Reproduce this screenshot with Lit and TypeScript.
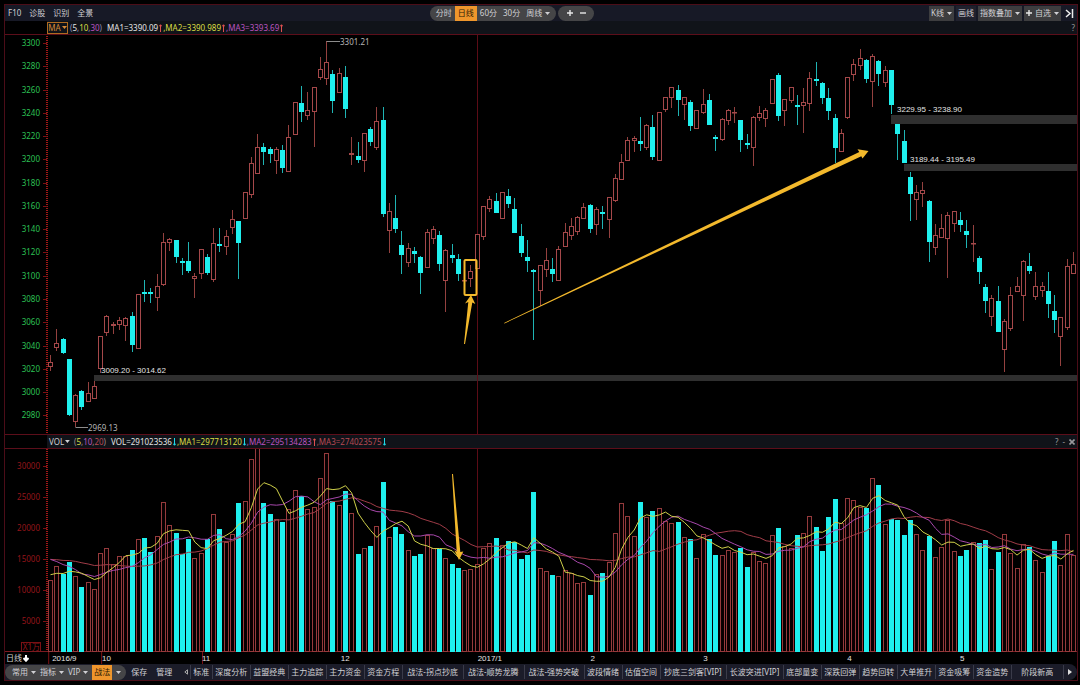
import { LitElement, html, svg, css } from "lit";
import { customElement } from "lit/decorators.js";

/* One row per trading day: high, body top, body bottom, low, f = falling / r = rising. */
const CANDLES = `355,362,367,371,r 329,343,348,351,r 338,339,353,354,f 359,359,415,416,f 394,395,422,427,r
390,391,407,410,f 382,393,402,402,r 381,386,399,399,r 336,336,369,373,r 315,316,333,336,r
322,324,326,334,r 317,320,325,330,r 317,318,326,341,r 312,316,345,352,f 294,294,349,349,r
280,292,293,302,f 288,292,294,303,f 274,286,298,311,r 233,242,285,286,r 238,239,243,251,r
240,240,257,263,f 258,261,262,275,f 242,261,271,273,f 273,276,279,298,r 249,249,274,279,r
254,257,273,275,f 228,243,280,282,r 228,244,246,252,f 230,236,247,255,r 210,219,228,234,r
221,221,243,279,f 192,192,219,219,r 157,163,195,198,r 134,147,174,174,r 143,147,152,165,f
147,149,154,163,f 147,149,161,174,r 145,150,168,173,f 125,137,172,172,r 102,102,135,135,r
86,103,112,122,f 92,110,116,120,r 87,87,112,147,r 57,69,78,80,r 41,62,79,85,r
70,74,101,113,f 68,73,93,93,r 66,77,109,118,f 137,153,155,165,r 142,156,160,163,f
133,133,161,172,r 127,129,142,146,f 107,121,148,150,r 107,120,214,217,f 203,211,231,253,r
195,218,229,233,f 231,245,255,274,f 243,248,263,267,r 247,251,254,263,f 256,257,273,294,f
229,232,268,268,r 226,229,239,244,r 231,235,264,271,f 249,250,281,312,r 244,255,258,263,f
254,259,274,281,f 279,280,281,282,r 265,271,279,287,r 234,234,269,269,r 206,206,237,240,r
196,199,209,212,r 193,201,213,213,f 192,192,219,219,r 189,196,204,208,f 198,209,233,233,f
224,236,253,257,f 240,257,261,272,f 269,270,272,340,f 265,265,291,306,r 248,260,270,277,r
258,269,274,282,f 246,249,281,281,r 223,232,247,247,r 218,226,236,240,r 216,217,232,235,r
203,207,219,219,r 204,205,229,233,f 207,209,225,235,r 206,212,214,229,f 197,197,220,238,r
174,178,201,202,r 154,162,180,180,r 137,140,161,161,r 136,138,141,152,r 117,141,144,151,f
124,125,148,150,r 115,127,157,160,f 112,112,161,161,r 97,97,110,112,r 87,87,98,108,r
85,90,100,116,f 97,97,105,120,r 100,102,126,131,f 110,110,129,129,r 89,104,113,114,r
94,100,125,125,f 135,137,138,151,f 118,119,140,141,r 109,110,121,125,r 107,112,113,123,r
120,120,140,152,f 134,143,145,149,f 116,117,148,166,r 106,113,118,121,r 108,110,119,127,r
79,79,104,104,r 73,75,116,121,f 99,99,111,126,r 87,87,101,103,r 95,105,107,125,f
88,102,106,133,r 72,78,104,111,r 62,79,81,86,f 82,83,98,104,f 88,98,111,120,f
114,118,148,163,f 129,133,152,152,r 77,77,118,119,r 59,64,75,81,r 49,58,66,70,r
59,60,79,83,f 54,56,82,107,r 60,61,74,86,f 66,70,83,87,r 70,70,105,114,f
124,124,134,160,f 130,141,163,163,f 172,177,194,221,f 185,192,200,220,r 182,190,194,207,r
200,201,242,262,f 224,235,248,255,r 214,228,238,238,r 212,215,239,278,r 211,211,224,232,r
212,220,225,232,f 220,231,235,248,f 225,243,244,262,r 256,258,272,284,f 284,287,301,313,f
295,298,317,326,r 286,301,332,332,f 319,321,350,372,r 287,295,329,331,r 277,286,292,292,r
260,261,296,321,r 253,266,271,274,f 272,286,297,300,r 282,286,291,297,r 272,291,304,318,f
295,311,320,333,f 317,317,337,366,r 259,266,328,330,r 252,264,274,274,r`
  .split(/\s+/)
  .map((row) => {
    const p = row.split(",");
    return { high: +p[0], top: +p[1], bottom: +p[2], low: +p[3], falling: p[4] === "f" };
  });

/* Volume of each day as a depth below the plot ceiling, three units to a pixel. */
const VOLUMES = [
  451, 408, 433, 397, 439, 472, 457, 478, 370, 355, 403, 379, 379, 361, 328, 325, 366, 319, 217, 286, 309, 373, 327,
  385, 370, 326, 251, 297, 336, 313, 218, 212, 88, 54, 218, 253, 268, 275, 237, 181, 198, 236, 232, 143, 70, 213, 226,
  184, 250, 373, 353, 348, 287, 155, 322, 292, 312, 359, 378, 373, 316, 353, 357, 383, 403, 414, 421, 418, 403, 353,
  340, 324, 346, 332, 335, 388, 376, 185, 413, 422, 436, 439, 421, 430, 458, 455, 494, 432, 428, 396, 310, 220, 257,
  317, 216, 262, 244, 235, 274, 280, 277, 320, 326, 385, 311, 328, 375, 376, 361, 367, 354, 412, 366, 394, 400, 314,
  294, 347, 355, 314, 308, 257, 292, 364, 262, 206, 280, 205, 211, 232, 234, 143, 165, 283, 267, 270, 316, 270, 313,
  361, 319, 382, 350, 269, 364, 379, 361, 335, 339, 330, 416, 367, 311, 370, 413, 343, 352, 391, 427, 379, 334, 406,
  311, 376,
];

/* Days before the first visible one, needed by the moving averages. */
const HISTORY = [...Array(10).fill(388), ...Array(5).fill(342), ...Array(4).fill(430)];

const VOLUME_FLOOR = 652;
const dayX = (i: number) => 50.5 + i * 6.276;
const barLeft = (i: number) => Math.floor(dayX(i)) - 2;
const volumeY = (v: number) => 430 + v / 3;

function averageLine(days: number): string {
  const all = [...HISTORY, ...VOLUMES];
  return VOLUMES.map((_, i) => {
    const end = HISTORY.length + i + 1;
    const part = all.slice(Math.max(0, end - days), end);
    const mean = part.reduce((a, b) => a + b, 0) / part.length;
    return `${dayX(i).toFixed(1)},${volumeY(mean).toFixed(1)}`;
  }).join(" ");
}

const PRICE_TICKS = Array.from({ length: 17 }, (_, i) => ({ label: 3300 - i * 20, y: 43 + i * 23.27 }));
const VOLUME_TICKS = Array.from({ length: 6 }, (_, i) => ({ label: 30000 - i * 5000, y: 466 + i * 31 }));

const GAPS = [
  { x: 891, y: 115, h: 9, label: "3229.95 - 3238.90", tx: 897, ty: 112 },
  { x: 904, y: 164, h: 7, label: "3189.44 - 3195.49", tx: 910, ty: 162 },
  { x: 94, y: 375, h: 6, label: "3009.20 - 3014.62", tx: 101, ty: 373 },
];

const MONTHS: [number, string][] = [
  [51, "2016/9"], [101, "10"], [201, "11"], [340, "12"], [477, "2017/1"],
  [590, "2"], [703, "3"], [847, "4"], [960, "5"],
];

const STRATEGIES = [
  "标准", "深度分析", "益盟经典", "主力追踪", "主力资金", "资金方程", "战法-拐点抄底", "战法-顺势龙腾",
  "战法-强势突破", "波段情绪", "估值空间", "抄底三剑客[VIP]", "长波突进[VIP]", "底部量变", "深跌回弹",
  "趋势回转", "大单推升", "资金吸筹", "资金造势", "阶段新高",
];

const tabClass = (name: string) =>
  name.includes("-") ? "tab series" : name.includes("[") ? "tab vip" : "tab";

const caret = html`<svg class="caret" viewBox="0 0 5 3" aria-hidden="true"><path d="M0 0h5L2.5 3z" /></svg>`;
const rise = html`<svg class="trend up" viewBox="0 0 3 8" role="img" aria-label="上升">
  <path d="M1.5 8V1M0 2.5L1.5 .7L3 2.5" />
</svg>`;
const fall = html`<svg class="trend down" viewBox="0 0 3 8" role="img" aria-label="下降">
  <path d="M1.5 0V7M0 5.5L1.5 7.3L3 5.5" />
</svg>`;

@customElement("app-root")
export class AppRoot extends LitElement {
  static styles = css`
    :host {
      display: block;
      min-height: 100vh;
      box-sizing: border-box;
      padding: 4px 2px 3px 4px;
      background: #000;
      color: #d0d0d4;
      font: 8px/12px "Noto Sans", "Noto Sans CJK SC", sans-serif;
    }
    button {
      font: inherit;
      color: inherit;
      background: none;
      border: 0;
      margin: 0;
      padding: 0;
      white-space: nowrap;
      display: flex;
      align-items: center;
      justify-content: center;
      gap: 3px;
    }
    svg {
      display: block;
    }
    .frame {
      border: 1px solid #4c0d18;
    }
    .caret {
      width: 5px;
      height: 3px;
      fill: currentColor;
    }
    .toolbar {
      display: grid;
      grid-template-columns: 1fr auto 1fr;
      height: 16px;
      background: #171926;
    }
    .group {
      display: flex;
      align-items: center;
      gap: 8px;
      padding-left: 3px;
    }
    .centre {
      display: flex;
      align-items: center;
      gap: 2px;
      padding-right: 58px;
    }
    .pill {
      display: flex;
      align-items: stretch;
      height: 15px;
      border-radius: 8px;
      background: #454547;
    }
    .period {
      padding: 0 3px;
    }
    .periods {
      padding: 0 3px;
    }
    .zoom {
      padding: 0 5px;
    }
    .zoom button {
      width: 13px;
    }
    .glyph {
      width: 6px;
      height: 6px;
      fill: none;
      stroke: #e8e8e8;
      stroke-width: 1.4;
    }
    .active {
      background: #ef962c;
      color: #2b1a06;
    }
    .tools {
      display: flex;
      align-items: center;
      justify-content: flex-end;
      gap: 2px;
      padding-right: 1px;
    }
    .tool {
      height: 15px;
      padding: 0 2px;
      background: #3d3d3f;
    }
    .plain {
      background: #20212d;
    }
    .end {
      width: 13px;
    }
    .end svg {
      width: 9px;
      height: 9px;
      fill: none;
      stroke: #eee;
      stroke-width: 1.5;
    }
    .legend {
      display: flex;
      align-items: center;
      height: 13px;
      margin-left: 42px;
      background: #101319;
      white-space: nowrap;
    }
    .lined {
      border-bottom: 1px solid #5c0e1a;
    }
    .study {
      border-top: 1px solid #5c0e1a;
    }
    .indicator {
      box-sizing: border-box;
      height: 12px;
      width: 21px;
      gap: 1px;
    }
    .boxed {
      border: 1px solid #b06a20;
      color: #d88a38;
    }
    .flat {
      margin-left: 2px;
    }
    .params {
      margin: 0 5px 0 2px;
    }
    .volume-params {
      margin: 0 5px 0 4px;
      color: #a08f8f;
    }
    .trend {
      width: 3px;
      height: 8px;
      margin: 0 1px;
      fill: none;
      stroke: currentColor;
    }
    .lavender {
      color: #9090b8;
    }
    .white {
      color: #e4e4e4;
    }
    .yellow {
      color: #dade44;
    }
    .magenta {
      color: #bc54c0;
    }
    .red {
      color: #b84a54;
    }
    .up {
      color: #e05050;
    }
    .down {
      color: #20d8e8;
    }
    .panel-actions {
      display: flex;
      gap: 4px;
      margin-left: auto;
      padding-right: 2px;
      color: #98989c;
    }
    .panel-actions svg {
      width: 6px;
      height: 6px;
      stroke: currentColor;
      stroke-width: 1.6;
      fill: none;
    }
    .plot {
      width: 100%;
      height: auto;
    }
    .price-label {
      fill: #2cc054;
      text-anchor: end;
    }
    .volume-label {
      fill: #94151a;
      text-anchor: end;
    }
    .note {
      fill: #e4e4e4;
      font-family: "Liberation Sans", sans-serif;
    }
    .extreme {
      fill: #b4b4b4;
    }
    .extreme-line {
      stroke: #8c8c8c;
      fill: none;
    }
    .axis {
      stroke: #7c1014;
      fill: none;
    }
    .dots {
      stroke: #a01818;
      stroke-dasharray: 1 1;
      stroke-width: 2;
    }
    .divider {
      stroke: #5c0c16;
    }
    .gap {
      fill: #2f2f2f;
    }
    .falling {
      fill: #1ff0ee;
    }
    .falling-wick {
      stroke: #1fb4b4;
    }
    .rising {
      fill: #000;
      stroke: #a5484a;
    }
    .rising-wick {
      stroke: #94413f;
    }
    .rising-volume {
      fill: #080001;
      stroke: #953a3c;
    }
    .floor {
      stroke: #7c1a20;
    }
    .mark {
      fill: #f3b92c;
    }
    .mark-box {
      fill: none;
      stroke: #f3b92c;
      stroke-width: 2;
    }
    .average {
      fill: none;
      stroke-width: 1;
    }
    .ma5 {
      stroke: #cfd04a;
    }
    .ma10 {
      stroke: #a848ac;
    }
    .ma20 {
      stroke: #a03c48;
    }
    .dates {
      display: flex;
      align-items: center;
    }
    .cycle {
      flex: 42 1 0;
      min-width: 0;
      gap: 1px;
      color: #d0d0d0;
      height: 12px;
      justify-content: flex-start;
      padding-left: 1px;
    }
    .cycle svg {
      width: 6px;
      height: 7px;
      fill: none;
      stroke: #fff;
      stroke-width: 2;
    }
    .months {
      flex: 1030 1 0;
      min-width: 0;
    }
    .footer {
      display: flex;
      align-items: center;
      height: 16px;
      border-radius: 0 8px 8px 0;
      background: #1b1c29;
      overflow: hidden;
    }
    .menus {
      gap: 4px;
      padding: 0 5px 0 7px;
    }
    .menus .active {
      padding: 0 2px;
    }
    .saves {
      display: flex;
      gap: 9px;
      padding: 0 9px 0 5px;
    }
    .arrow {
      width: 9px;
      height: 14px;
    }
    .arrow svg {
      width: 4px;
      height: 6px;
      fill: none;
      stroke: #aaa;
    }
    .arrow .solid {
      fill: #ddd;
      stroke: none;
    }
    .tabs {
      display: flex;
      flex: 1;
      min-width: 0;
      overflow: hidden;
    }
    .tab {
      flex: none;
      height: 14px;
      padding: 0 3px;
      box-shadow: inset 1px 0 #3a3b49;
    }
    .series {
      padding: 0 5px;
    }
    .vip {
      padding: 0 4px;
    }
    .tab:last-child {
      flex: 1;
    }
    .next {
      width: 14px;
      box-shadow: inset 1px 0 #3a3b49;
    }
  `;

  private renderCandles() {
    return CANDLES.map((c, i) => {
      const x = barLeft(i);
      const mid = x + 2.5;
      const wick = c.falling ? "falling-wick" : "rising-wick";
      const body = c.falling
        ? svg`<rect class="falling" x=${x} y=${c.top} width="5" height=${Math.max(2, c.bottom - c.top)} />`
        : svg`<rect class="rising" x=${x + 0.5} y=${c.top + 0.5} width="4" height=${Math.max(0.5, c.bottom - c.top - 1)} />`;
      return svg`<path class=${wick} d="M${mid} ${c.high}V${c.low}" />${body}`;
    });
  }

  private renderVolumes() {
    return VOLUMES.map((v, i) => {
      const x = barLeft(i);
      const y = Math.round(volumeY(v));
      return CANDLES[i].falling
        ? svg`<rect class="falling" x=${x} y=${y} width="5" height=${VOLUME_FLOOR - y} />`
        : svg`<rect class="rising-volume" x=${x + 0.5} y=${y + 0.5} width="4" height=${VOLUME_FLOOR - y - 1} />`;
    });
  }

  private renderToolbar() {
    return html`<header class="toolbar">
      <nav class="group">
        <button>F10</button><button>诊股</button><button>识别</button><button>全景</button>
      </nav>
      <div class="centre">
        <div class="pill periods">
          <button class="period">分时</button>
          <button class="period active">日线</button>
          <button class="period">60分</button>
          <button class="period">30分</button>
          <button class="period" aria-haspopup="menu">周线 ${caret}</button>
        </div>
        <div class="pill zoom">
          <button aria-label="放大"><svg class="glyph" viewBox="0 0 6 6"><path d="M0 3h6M3 0v6" /></svg></button>
          <button aria-label="缩小"><svg class="glyph" viewBox="0 0 6 6"><path d="M0 3h6" /></svg></button>
        </div>
      </div>
      <div class="tools">
        <button class="tool" aria-haspopup="menu">K线${caret}</button>
        <button class="tool plain">画线</button>
        <button class="tool" aria-haspopup="menu">指数叠加${caret}</button>
        <button class="tool" aria-haspopup="menu">
          <svg class="glyph" viewBox="0 0 6 6"><path d="M0 3h6M3 0v6" /></svg>自选${caret}
        </button>
        <button class="end" aria-label="收起">
          <svg viewBox="0 0 9 9"><path d="M1 1l4 3.5L1 8M7.5 0v9" /></svg>
        </button>
      </div>
    </header>`;
  }

  private renderPriceChart() {
    return html`<svg class="plot" viewBox="5 35 1072 399" role="img" aria-label="日线 K线图">
      <path class="dots" d="M47 36V434" />
      ${PRICE_TICKS.map(
        (t) => svg`<path class="axis" d="M43 ${Math.round(t.y) + 0.5}H47" />
          <text class="price-label" x="40" y=${Math.round(t.y) + 3}>${t.label}</text>`
      )}
      ${GAPS.map((g) => svg`<rect class="gap" x=${g.x} y=${g.y} width=${1077 - g.x} height=${g.h} />`)}
      <path class="divider" d="M477.5 35V434" />
      ${this.renderCandles()}
      ${GAPS.map((g) => svg`<text class="note" x=${g.tx} y=${g.ty}>${g.label}</text>`)}
      <path class="extreme-line" d="M326.5 41.5H340M75.5 427.5H88" />
      <text class="extreme" x="340" y="45">3301.21</text>
      <text class="extreme" x="88" y="431">2969.13</text>
      <rect class="mark-box" x="464.5" y="260" width="12" height="35" rx="1" />
      <path class="mark" d="M464 344L468.3 302L465 303.5L471 295L475.3 304L472.3 302.5L465 344z" />
      <path class="mark" d="M504 323L859.3 152L857.5 149.3L868.5 151L862.5 158.5L861.3 156.2L504.5 323.5z" />
    </svg>`;
  }

  private renderVolumeChart() {
    return html`<svg class="plot" viewBox="5 449 1072 203" role="img" aria-label="成交量">
      <path class="divider" d="M477.5 449V652" />
      <path class="dots" d="M47 449V652" />
      ${VOLUME_TICKS.map(
        (t) => svg`<path class="axis" d="M43 ${t.y + 0.5}H47" />
          <text class="volume-label" x="40" y=${t.y + 3}>${t.label}</text>`
      )}
      <rect class="axis" x="21.5" y="642.5" width="19" height="9" />
      <text class="volume-label" x="40" y="650">X1万</text>
      <path class="floor" d="M5 651.5H1077" />
      ${this.renderVolumes()}
      <polyline class="average ma20" points=${averageLine(20)} />
      <polyline class="average ma10" points=${averageLine(10)} />
      <polyline class="average ma5" points=${averageLine(5)} />
      <path class="mark" d="M452 474L456.7 551.7L454.5 550.5L459 560L463.3 551.5L460.3 552L453 474z" />
    </svg>`;
  }

  private renderFooter() {
    return html`<footer class="footer">
      <div class="pill menus">
        <button aria-haspopup="menu">常用${caret}</button>
        <button aria-haspopup="menu">指标${caret}</button>
        <button aria-haspopup="menu">VIP${caret}</button>
        <button class="active">战法</button>
        <button aria-label="更多战法">${caret}</button>
      </div>
      <div class="saves"><button>保存</button><button>管理</button></div>
      <button class="arrow" aria-label="向左"><svg viewBox="0 0 4 6"><path d="M3.5 .8v4.4L.8 3z" /></svg></button>
      <nav class="tabs">${STRATEGIES.map((s) => html`<button class=${tabClass(s)}>${s}</button>`)}</nav>
      <button class="arrow next" aria-label="向右">
        <svg class="solid" viewBox="0 0 4 6"><path d="M0 0v6l4-3z" /></svg>
      </button>
    </footer>`;
  }

  render() {
    return html`<main class="frame">
      ${this.renderToolbar()}
      <div class="lined">
        <div class="legend">
          <button class="indicator boxed" aria-haspopup="menu">MA${caret}</button>
          <span class="params lavender"
            >(<span class="white">5</span>,<span class="yellow">10</span>,<span class="magenta">30</span>)</span
          >
          <span class="white">MA1=3390.09</span>${rise}
          <span class="yellow">,MA2=3390.989</span>${rise}
          <span class="magenta">,MA3=3393.69</span>${rise}
          <span class="panel-actions"><button aria-label="帮助">?</button></span>
        </div>
      </div>
      ${this.renderPriceChart()}
      <div class="lined study">
        <div class="legend">
          <button class="indicator flat" aria-haspopup="menu">VOL${caret}</button>
          <span class="volume-params"
            >(<span class="yellow">5</span>,<span class="magenta">10</span>,<span class="red">20</span>)</span
          >
          <span class="white">VOL=291023536</span>${fall}
          <span class="yellow">,MA1=297713120</span>${fall}
          <span class="magenta">,MA2=295134283</span>${rise}
          <span class="red">,MA3=274023575</span>${fall}
          <span class="panel-actions">
            <button aria-label="帮助">?</button>
            <button aria-label="最小化">-</button>
            <button aria-label="关闭"><svg viewBox="0 0 6 6"><path d="M.5 .5l5 5M5.5 .5l-5 5" /></svg></button>
          </span>
        </div>
      </div>
      ${this.renderVolumeChart()}
      <div class="dates">
        <button class="cycle">日线<svg viewBox="0 0 6 7"><path d="M3 0v5M.5 3L3 5.7L5.5 3" /></svg></button>
        <svg class="months" viewBox="47 652 1030 12" role="img" aria-label="日期">
          <path class="axis" d="M47.5 652v12M100.5 652v12M201.5 652v12" />
          ${MONTHS.map(([x, label]) => svg`<text class="note" x=${x} y="661">${label}</text>`)}
        </svg>
      </div>
      ${this.renderFooter()}
    </main>`;
  }
}
